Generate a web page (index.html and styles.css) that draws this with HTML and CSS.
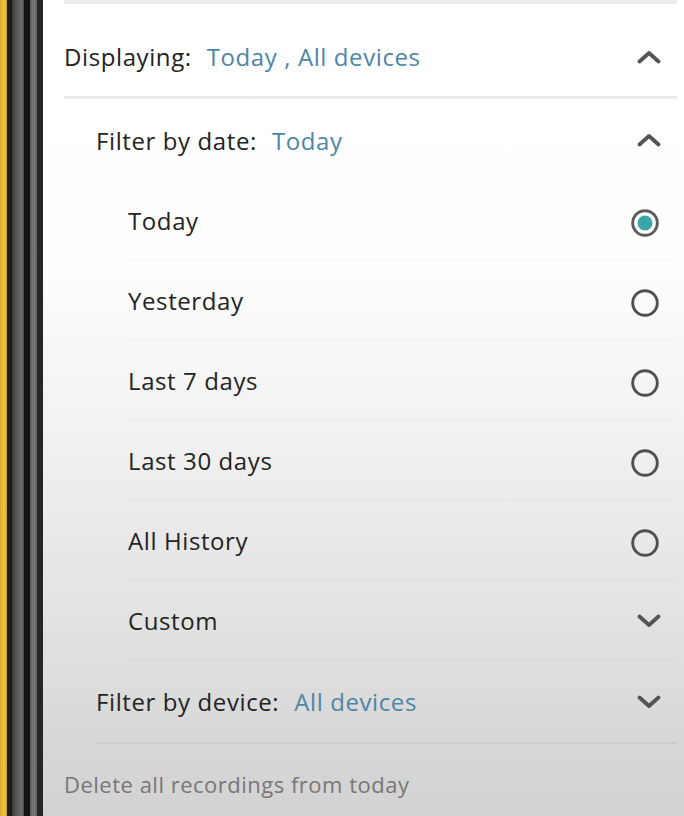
FILE: index.html
```html
<!DOCTYPE html>
<html>
<head>
<meta charset="utf-8">
<link rel="stylesheet" href="styles.css">
</head>
<body>
<div class="device">
  <div class="bezel">
    <div class="b-yellow"></div>
    <div class="b-dark1"></div>
    <div class="b-grey1"></div>
    <div class="b-dark2"></div>
    <div class="b-grey2"></div>
    <div class="b-dark3"></div>
  </div>
  <div class="screen">
    <div class="top-strip"></div>
    <div class="row row-main">
      <span class="label">Displaying:</span>
      <span class="value">Today , All devices</span>
      <svg class="chev" width="24" height="14" viewBox="0 0 24 14"><path d="M2.5 11.5 L12 3 L21.5 11.5" fill="none" stroke="#555" stroke-width="3.8" stroke-linecap="round" stroke-linejoin="round"/></svg>
    </div>
    <div class="sep-main"></div>
    <div class="row row-sub">
      <span class="label">Filter by date:</span>
      <span class="value">Today</span>
      <svg class="chev" width="24" height="14" viewBox="0 0 24 14"><path d="M2.5 11.5 L12 3 L21.5 11.5" fill="none" stroke="#555" stroke-width="3.8" stroke-linecap="round" stroke-linejoin="round"/></svg>
    </div>
    <div class="options">
      <div class="row row-opt">
        <span class="opt">Today</span>
        <svg class="radio" width="30" height="30" viewBox="0 0 30 30"><circle cx="15" cy="15" r="12.3" fill="#fff" stroke="#5c5c5c" stroke-width="2.9"/><circle cx="15" cy="15" r="7.5" fill="#3aa6a6"/></svg>
      </div>
      <div class="row row-opt">
        <span class="opt">Yesterday</span>
        <svg class="radio" width="30" height="30" viewBox="0 0 30 30"><circle cx="15" cy="15" r="12.3" fill="none" stroke="#505050" stroke-width="2.9"/></svg>
      </div>
      <div class="row row-opt">
        <span class="opt">Last 7 days</span>
        <svg class="radio" width="30" height="30" viewBox="0 0 30 30"><circle cx="15" cy="15" r="12.3" fill="none" stroke="#505050" stroke-width="2.9"/></svg>
      </div>
      <div class="row row-opt">
        <span class="opt">Last 30 days</span>
        <svg class="radio" width="30" height="30" viewBox="0 0 30 30"><circle cx="15" cy="15" r="12.3" fill="none" stroke="#505050" stroke-width="2.9"/></svg>
      </div>
      <div class="row row-opt">
        <span class="opt">All History</span>
        <svg class="radio" width="30" height="30" viewBox="0 0 30 30"><circle cx="15" cy="15" r="12.3" fill="none" stroke="#505050" stroke-width="2.9"/></svg>
      </div>
      <div class="row row-opt">
        <span class="opt">Custom</span>
        <svg class="chev" width="24" height="14" viewBox="0 0 24 14"><path d="M2.5 2.5 L12 11 L21.5 2.5" fill="none" stroke="#555" stroke-width="3.8" stroke-linecap="round" stroke-linejoin="round"/></svg>
      </div>
    </div>
    <div class="row row-sub row-device">
      <span class="label">Filter by device:</span>
      <span class="value">All devices</span>
      <svg class="chev" width="24" height="14" viewBox="0 0 24 14"><path d="M2.5 2.5 L12 11 L21.5 2.5" fill="none" stroke="#555" stroke-width="3.8" stroke-linecap="round" stroke-linejoin="round"/></svg>
    </div>
    <div class="delete">Delete all recordings from today</div>
  </div>
</div>
</body>
</html>
```

FILE: styles.css
```css
html, body {
  margin: 0;
  padding: 0;
  height: 100%;
  overflow: hidden;
}
body {
  font-family: "Open Sans", "Noto Sans", sans-serif;
  color: #222;
}
.device {
  display: flex;
  height: 816px;
  width: 684px;
}
.bezel {
  display: flex;
  width: 43px;
  flex: none;
}
.b-yellow { width: 7px; background: linear-gradient(90deg, #d9a92e, #efc54a 60%, #c9a030); }
.b-dark1 { width: 5px; background: #1c1c1a; }
.b-grey1 { width: 12px; background: linear-gradient(90deg, #3a3a3a, #585858 40%, #6c6c6c 80%, #4a4a4a); }
.b-dark2 { width: 6px; background: #141414; }
.b-grey2 { width: 7px; background: linear-gradient(90deg, #5a5a5a, #7a7a7a 60%, #5e5e5e); }
.b-dark3 { width: 6px; background: #262626; }
.screen {
  flex: 1;
  display: flex;
  flex-direction: column;
  padding-left: 21px;
  background: linear-gradient(180deg, #ffffff 0px, #fdfefd 260px, #eeeeee 480px, #e2e2e2 620px, #d6d6d6 760px, #d2d2d2 816px);
}
.top-strip {
  height: 4px;
  background: #ebebeb;
  margin-right: 7px;
}
.row {
  display: flex;
  align-items: center;
  padding-right: 16px;
  font-size: 24px;
  letter-spacing: 0.6px;
  box-sizing: border-box;
}
.label { color: #232323; }
.value { color: #4c86a6; margin-left: 15px; }
.chev { margin-left: auto; }
.radio { margin-left: auto; margin-right: 1px; margin-top: 5px; }
.row-main {
  height: 92px;
  padding-top: 13px;
  margin-right: 7px;
}
.sep-main {
  height: 3px;
  background: #ececec;
  margin-right: 7px;
}
.row-sub {
  height: 82px;
  padding-left: 32px;
  margin-right: 7px;
}
.options {
  display: flex;
  flex-direction: column;
  padding-left: 64px;
  margin-right: 7px;
}
.row-opt {
  height: 80px;
  border-bottom: 1px solid rgba(0, 0, 0, 0.035);
}
.opt { color: #232323; }
.row-device {
  height: 83px;
  border-bottom: 2px solid rgba(0, 0, 0, 0.05);
  margin-left: 32px;
  padding-left: 0;
}
.delete {
  font-size: 22px;
  letter-spacing: 0.5px;
  color: #777;
  padding-top: 25px;
}
```
